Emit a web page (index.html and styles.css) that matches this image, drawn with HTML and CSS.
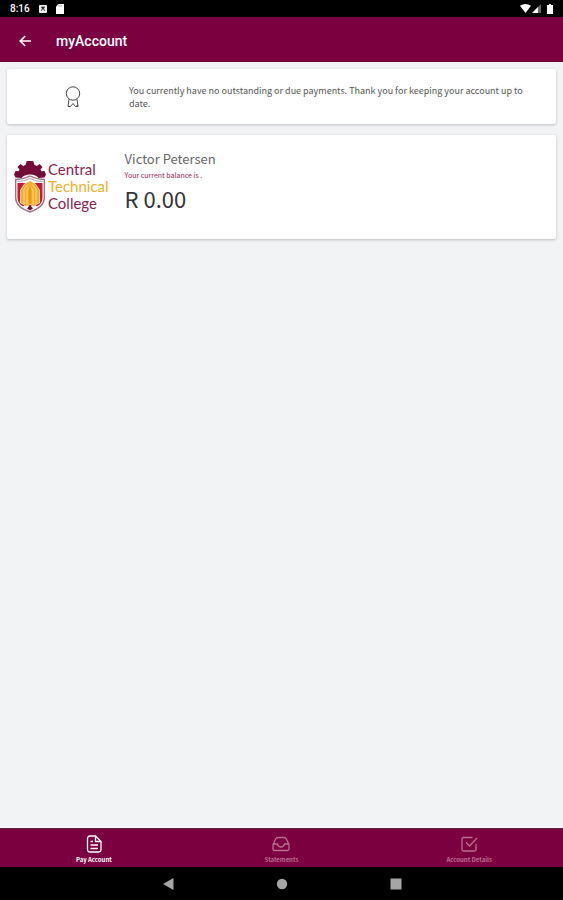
FILE: index.html
```
<!DOCTYPE html>
<html lang="en">
<head>
<meta charset="utf-8">
<meta name="viewport" content="width=device-width, initial-scale=1">
<title>myAccount</title>
<link rel="stylesheet" href="styles.css">
</head>
<body>
<div class="status">
  <span class="time">8:16</span>
  <svg width="8" height="8" viewBox="0 0 8 8"><rect width="8" height="8" rx="1" fill="#eee"/><path d="M2.500 5.800 4 2l1.500 3.800M2 2.200h4" stroke="#222" fill="none"/></svg>
  <svg width="8" height="10" viewBox="0 0 8 10"><path d="M2.500 0H8v10H0V2.500z" fill="#fff"/><path d="M3 1v1.500M5 1v1.500" stroke="#555" stroke-width=".7"/></svg>
  <span class="signals">
    <svg width="11" height="9" viewBox="0 0 11 9"><path d="M0 1.800Q5.500-1.600 11 1.800L5.500 9z" fill="#fff"/></svg>
    <svg width="9" height="9" viewBox="0 0 9 9"><path d="M9 0v9H0z" fill="#666"/><path d="M6 3v6H0z" fill="#fff"/></svg>
    <svg class="battery" width="6" height="10" viewBox="0 0 6 10"><path d="M2 0h2v1h2v9H0V1h2z" fill="#fff"/></svg>
  </span>
</div>
<header class="appbar">
  <button class="back" aria-label="Back"><svg width="12" height="12" viewBox="0 0 12 12" fill="none" stroke="#fff" stroke-width="1.700"><path d="M12 6H1.200M6.200 1 1.200 6l5 5"/></svg></button>
  <h1>myAccount</h1>
</header>
<main>
  <section class="card notice">
    <svg class="ribbon" width="16" height="24" viewBox="0 0 16 24" fill="none" stroke="#444" stroke-width="1"><circle cx="8" cy="8.500" r="6.700"/><path d="M4 14.200 3 21.500h2.500L8 18.500l2.500 3H13l-1-7.300"/><path d="M11 20.500h2v1.500h-2z" fill="#444" stroke="none"/></svg>
    <p>You currently have no outstanding or due payments. Thank you for keeping your account up to date.</p>
  </section>
  <section class="card account">
    <div class="logo">
      <svg width="32" height="52" viewBox="0 0 32 52">
        <path d="M0 13.500 1.500 10l3 .3 1-1.800L3.500 6l3-3 2.700 2 2.500-1.200.8-3.300 1-.5h5l1 .5.8 3.300L22.800 5l2.700-2 3 3-2 2.500 1 1.800 3-.3L32 13.500l-1.500 3-6 .5Q22 13.500 16 13.500T7.500 17l-6-.5z" fill="#750b38"/>
        <path d="M1.700 18.500q8-.3 14.300-3.500 6.300 3.200 14.300 3.500V37q0 9-14.300 14Q1.700 46 1.700 37z" fill="#fff" stroke="#a07084" stroke-width="1.400"/>
        <path d="M3.500 22h25v15q-.5 6-5 8h-15q-4.500-2-5-8z" fill="#c91936"/>
        <path d="M6.500 42V29l4-6L16 19.500l5.500 3.500 4 6v13q-3 .5-5 3.500L16 43.500l-4.500 2Q9.500 42.500 6.500 42z" fill="#f6ae20" stroke="#fff" stroke-width=".7"/>
        <path d="M10 43V28l4-4.500M22 43V28l-4-4.500M13 43V29l3-4 3 4v14" fill="none" stroke="#fff2c8" stroke-width=".7"/>
        <path d="M16 25v18" stroke="#d98217"/>
        <path d="M3.500 20.500q7 0 12.500-3 5.500 3 12.500 3" fill="none" stroke="#b9a0ac"/>
        <path d="m16 44 3 3.500-3 2-3-2z" fill="#750b38"/>
      </svg>
      <div class="wordmark"><span>Central</span><span class="gold">Technical</span><span>College</span></div>
    </div>
    <div class="details">
      <h2>Victor Petersen</h2>
      <p class="caption">Your current balance is .</p>
      <p class="balance">R 0.00</p>
    </div>
  </section>
</main>
<nav class="tabs">
  <a class="tab active" href="#pay"><svg width="18" height="18" viewBox="0 0 18 18" fill="none" stroke="currentColor" stroke-width="1.300"><path d="M10.500 1H5Q2.500 1 2.500 3.500v11Q2.500 17 5 17h8.500q2.500 0 2.500-2.500V6.500zM10.500 1v5.500H16M5.500 10h7.500M5.500 13.500h7.500M5.500 6.500H8"/></svg>Pay Account</a>
  <a class="tab" href="#statements"><svg width="18" height="18" viewBox="0 0 18 18" fill="none" stroke="currentColor" stroke-width="1.300"><path d="M1 9.500 3.800 3.800Q4.500 2.500 6 2.500h6q1.500 0 2.200 1.300L17 9.500V14q0 1.500-1.500 1.500h-13Q1 15.500 1 14zM1 9h4.500q.8 3 3.500 3t3.500-3H17"/></svg>Statements</a>
  <a class="tab" href="#details"><svg width="18" height="18" viewBox="0 0 18 18" fill="none" stroke="currentColor" stroke-width="1.300"><path d="M12.500 2.500h-9Q2 2.500 2 4v10.500Q2 16 3.500 16h11q1.500 0 1.500-1.500V9M6 7.500l3.500 3.500L17 3"/></svg>Account Details</a>
</nav>
<div class="system">
  <button aria-label="System back"><svg width="12" height="12" viewBox="0 0 12 12"><path d="M11.500 0v12L1 6z" fill="#a5a5a5"/></svg></button>
  <button aria-label="Home"><svg width="12" height="12" viewBox="0 0 12 12"><circle cx="6" cy="6" r="5.200" fill="#a5a5a5"/></svg></button>
  <button aria-label="Recent apps"><svg width="12" height="12" viewBox="0 0 12 12"><path d="M.5.5h11v11H.5z" fill="#a5a5a5"/></svg></button>
</div>
</body>
</html>
```
FILE: styles.css
```
* { box-sizing: border-box; }
body {
  margin: 0;
  min-height: 100vh;
  display: flex;
  flex-direction: column;
  background: #f1f3f5;
  color: #555;
  font-family: "Noto Sans CJK SC", "Noto Sans", sans-serif;
}
h1, h2, p { margin: 0; }
svg { display: block; flex: none; }
button { padding: 0; border: 0; background: none; }
.status {
  display: flex;
  align-items: center;
  gap: 9px;
  height: 17px;
  padding: 0 10px;
  background: #000;
  color: #fff;
}
.time { font: 500 10px Roboto, sans-serif; }
.signals { display: flex; align-items: center; gap: 1px; margin-left: auto; }
.battery { margin-left: 5px; }
.appbar {
  display: flex;
  align-items: center;
  gap: 25px;
  height: 45px;
  padding: 3px 19px 0;
  border-bottom: 1px solid #680028;
  background: #7b003f;
}
h1 { color: #fff; font: 500 14px Roboto, sans-serif; }
main {
  flex: 1;
  display: flex;
  flex-direction: column;
  gap: 11px;
  padding: 7px;
}
.card {
  background: #fff;
  border-radius: 2px;
  box-shadow: 0 1px 3px rgba(0, 0, 0, .22);
}
.notice {
  display: grid;
  grid-template-columns: 116px 1fr;
  align-items: center;
  padding: 15px 24px 14px 6px;
  font-size: 9px;
  line-height: 13px;
}
.ribbon { justify-self: center; margin-left: 4px; }
.account { display: flex; gap: 16px; padding: 15px 7px 25px; }
.logo { display: flex; align-items: center; gap: 2px; padding-top: 9px; }
.wordmark {
  display: flex;
  flex-direction: column;
  color: #8a1d50;
  font: 15px/17px Lato, sans-serif;
}
.gold { color: #f2ae2d; }
h2 { color: #666; font-size: 13px; font-weight: 400; line-height: 17px; }
.caption { margin-top: 3px; color: #9b1c55; font-size: 7px; line-height: 10px; }
.balance { margin-top: 3px; color: #333; font-size: 22px; line-height: 31px; }
.tabs {
  display: grid;
  grid-template-columns: repeat(3, 1fr);
  height: 39px;
  border-top: 1px solid #5f2440;
  background: #7b003f;
}
.tab {
  display: flex;
  flex-direction: column;
  align-items: center;
  gap: 3px;
  padding-top: 6px;
  color: #b9708f;
  font-size: 6px;
  font-weight: 700;
  line-height: 8px;
  text-decoration: none;
}
.active { color: #fff; }
.system {
  display: flex;
  align-items: center;
  justify-content: center;
  gap: 102px;
  height: 33px;
  background: #000;
}
```
